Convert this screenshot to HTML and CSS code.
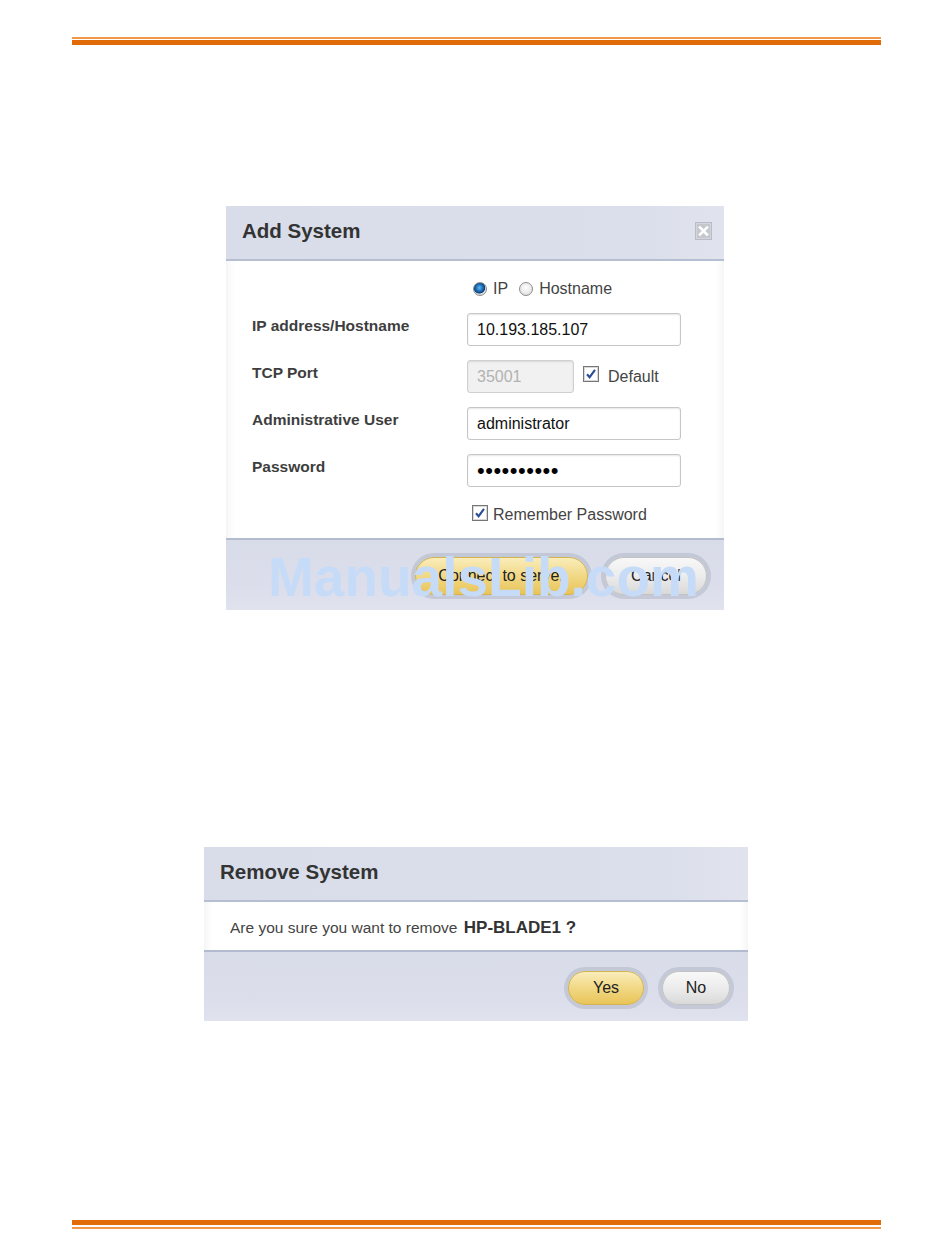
FILE: index.html
```html
<!DOCTYPE html>
<html>
<head>
<meta charset="utf-8">
<title>Add System / Remove System</title>
<link rel="stylesheet" href="styles.css">
</head>
<body>
<div class="page">
  <div class="rule rule-top"><div class="rule-thin"></div><div class="rule-thick"></div></div>

  <div class="dialog add-dialog">
    <div class="dlg-head">
      <h2 class="dlg-title">Add System</h2>
      <span class="close-btn">
        <svg width="17" height="18" viewBox="0 0 17 18">
          <rect x="0" y="0" width="17" height="18" fill="#b8bbc3"/>
          <rect x="1.5" y="1.5" width="14" height="15" fill="#c4c7ce" stroke="#d3d6dc" stroke-width="1"/>
          <path d="M5 5.5 L12 12.5 M12 5.5 L5 12.5" stroke="#ffffff" stroke-width="2.6" stroke-linecap="square"/>
        </svg>
      </span>
    </div>
    <div class="dlg-body add-body">
      <div class="radio-row">
        <span class="radio radio-on"></span><span class="radio-label">IP</span>
        <span class="radio"></span><span class="radio-label">Hostname</span>
      </div>
      <div class="form-grid">
        <div class="f-label">IP address/Hostname</div>
        <div class="f-field"><div class="input">10.193.185.107</div></div>

        <div class="f-label">TCP Port</div>
        <div class="f-field">
          <div class="input input-small input-disabled">35001</div>
          <span class="check">
            <svg width="16" height="16" viewBox="0 0 16 16"><rect x="0.5" y="0.5" width="15" height="15" fill="#fff" stroke="#767676"/><rect x="1.5" y="1.5" width="13" height="13" fill="none" stroke="#d8d8d8"/><path d="M4 8.2 L6.6 11.2 L12 3.8" fill="none" stroke="#2c4d98" stroke-width="2.1"/></svg>
          </span>
          <span class="check-label">Default</span>
        </div>

        <div class="f-label">Administrative User</div>
        <div class="f-field"><div class="input">administrator</div></div>

        <div class="f-label">Password</div>
        <div class="f-field"><div class="input input-pass">••••••••••</div></div>
      </div>
      <div class="remember-row">
        <span class="check">
          <svg width="16" height="16" viewBox="0 0 16 16"><rect x="0.5" y="0.5" width="15" height="15" fill="#fff" stroke="#767676"/><rect x="1.5" y="1.5" width="13" height="13" fill="none" stroke="#d8d8d8"/><path d="M4 8.2 L6.6 11.2 L12 3.8" fill="none" stroke="#2c4d98" stroke-width="2.1"/></svg>
        </span>
        <span class="remember-label">Remember Password</span>
      </div>
    </div>
    <div class="dlg-foot add-foot">
      <span class="btn btn-primary btn-lg btn-connect">Connect to server</span>
      <span class="btn btn-secondary btn-lg btn-cancel">Cancel</span>
      <span class="watermark">ManualsLib.com</span>
    </div>
  </div>

  <div class="dialog remove-dialog">
    <div class="dlg-head">
      <h2 class="dlg-title">Remove System</h2>
    </div>
    <div class="dlg-body remove-body">
      <span class="question">Are you sure you want to remove <b class="sys-name">HP-BLADE1 ?</b></span>
    </div>
    <div class="dlg-foot remove-foot">
      <span class="btn btn-primary btn-yes">Yes</span>
      <span class="btn btn-secondary btn-no">No</span>
    </div>
  </div>

  <div class="rule rule-bottom"><div class="rule-thick"></div><div class="rule-thin"></div></div>
</div>
</body>
</html>
```

FILE: styles.css
```css
* { box-sizing: border-box; }

html, body {
  margin: 0;
  padding: 0;
  background: #ffffff;
}

body {
  font-family: "Liberation Sans", Arial, sans-serif;
  color: #333;
}

.page {
  width: 950px;
  height: 1260px;
  display: flex;
  flex-direction: column;
  padding-top: 37px;
}

/* orange rules */
.rule {
  margin-left: 72px;
  width: 809px;
  display: flex;
  flex-direction: column;
}
.rule-thin { height: 2px; background: #f0974a; }
.rule-thick { height: 5px; background: #e16b09; }
.rule-top .rule-thin { margin-bottom: 1px; }
.rule-bottom { margin-top: 199px; }
.rule-bottom .rule-thin { margin-top: 2px; }

/* dialogs */
.dialog {
  display: flex;
  flex-direction: column;
  background: #fff;
}
.add-dialog {
  margin-left: 226px;
  margin-top: 161px;
  width: 498px;
  height: 404px;
}
.remove-dialog {
  margin-left: 204px;
  margin-top: 237px;
  width: 544px;
  height: 174px;
}

.dlg-head {
  height: 55px;
  background: linear-gradient(to right, #d9ddea 0%, #dbdfeb 85%, #e1e4ee 100%);
  border-bottom: 2px solid #b6bed1;
  display: flex;
  align-items: center;
  justify-content: space-between;
  padding: 0 12px 0 16px;
}
.dlg-title {
  margin: 0;
  font-size: 20.5px;
  font-weight: bold;
  color: #333;
  line-height: 24px;
  padding-bottom: 3px;
}
.close-btn {
  display: flex;
  width: 17px;
  height: 18px;
  margin-top: -4px;
}

.dlg-body {
  background: #fff;
  box-shadow: inset 10px 0 10px -8px rgba(0,0,0,0.06), inset -10px 0 10px -8px rgba(0,0,0,0.06);
}

.add-body {
  height: 277px;
  padding: 18px 0 0 26px;
  display: flex;
  flex-direction: column;
}

.radio-row {
  display: flex;
  align-items: center;
  height: 18px;
  margin-left: 221px;
  font-size: 16px;
  color: #444;
  padding-top: 2px;
}
.radio {
  width: 14px;
  height: 14px;
  border-radius: 50%;
  border: 1px solid #8d8d8d;
  background: radial-gradient(circle at 50% 40%, #ffffff 0%, #e8e8e8 60%, #cfcfcf 100%);
  flex: none;
}
.radio-on {
  background: radial-gradient(circle at 45% 40%, #6db8ec 0%, #1a6fb8 35%, #0d3f78 55%, #d8d8d8 62%, #f2f2f2 100%);
}
.radio-label { margin-left: 6px; margin-right: 11px; }

.form-grid {
  margin-top: 16px;
  display: grid;
  grid-template-columns: 215px 1fr;
  grid-auto-rows: 33px;
  row-gap: 14px;
}
.f-label {
  font-size: 15.5px;
  font-weight: bold;
  color: #3e3e3e;
  padding-top: 4px;
  line-height: 18px;
}
.f-field {
  display: flex;
  align-items: center;
}
.input {
  width: 214px;
  height: 33px;
  border: 1px solid #c6c6c6;
  border-radius: 3px;
  background: #fff;
  box-shadow: inset 0 1px 2px rgba(0,0,0,0.10);
  font-size: 16px;
  color: #111;
  padding-left: 9px;
  display: flex;
  align-items: center;
}
.input-small { width: 107px; }
.input-disabled {
  background: #f1f1f1;
  border-color: #d0d0d0;
  color: #b2b2b2;
}
.input-pass {
  font-size: 22px;
  letter-spacing: 0.5px;
  color: #000;
  padding-top: 1px;
}
.check {
  display: flex;
  width: 16px;
  height: 16px;
  flex: none;
}
.f-field .check { margin-left: 9px; margin-top: -5px; }
.check-label {
  margin-left: 9px;
  font-size: 16px;
  color: #444;
}

.remember-row {
  margin-top: 17px;
  margin-left: 220px;
  display: flex;
  align-items: center;
  height: 18px;
}
.remember-label {
  margin-left: 5px;
  font-size: 16px;
  color: #444;
  padding-top: 3px;
}

/* footers */
.dlg-foot {
  position: relative;
  background: linear-gradient(to bottom, #d8dce8 0%, #dcdfeb 70%, #e0e3ee 100%);
  border-top: 2px solid #b3bbcf;
  display: flex;
  align-items: center;
  justify-content: flex-end;
}
.add-foot {
  height: 72px;
  padding-right: 17px;
  padding-top: 2px;
  gap: 17px;
}
.remove-foot {
  height: 71px;
  padding-right: 18px;
  padding-top: 3px;
  gap: 18px;
}

.btn {
  display: flex;
  align-items: center;
  justify-content: center;
  height: 34px;
  border-radius: 17px;
  font-size: 16px;
  color: #222;
  flex: none;
}
.btn-lg {
  height: 38px;
  border-radius: 19px;
}
.btn-primary {
  background: linear-gradient(to bottom, #faedbb 0%, #f2da8a 45%, #e9c458 100%);
  border: 1px solid #d4b352;
  box-shadow: 0 0 0 4px rgba(176,182,198,0.55);
}
.btn-secondary {
  background: linear-gradient(to bottom, #f8f8f8 0%, #ececec 50%, #d9d9d9 100%);
  border: 1px solid #c2c2c2;
  box-shadow: 0 0 0 4px rgba(176,182,198,0.55);
}
.btn-connect { width: 173px; }
.btn-cancel { width: 102px; }
.btn-yes { width: 76px; }
.btn-no { width: 68px; }

.watermark {
  position: absolute;
  left: 42px;
  top: 10px;
  font-size: 55px;
  line-height: 55px;
  font-weight: bold;
  color: #c6dbf8;
  white-space: nowrap;
  pointer-events: none;
}

.remove-body {
  height: 48px;
  padding-left: 26px;
  padding-top: 3px;
  display: flex;
  align-items: center;
}
.question {
  font-size: 15.5px;
  color: #444;
}
.sys-name {
  font-size: 17px;
  font-weight: bold;
  color: #333;
  margin-left: 2px;
}
```
